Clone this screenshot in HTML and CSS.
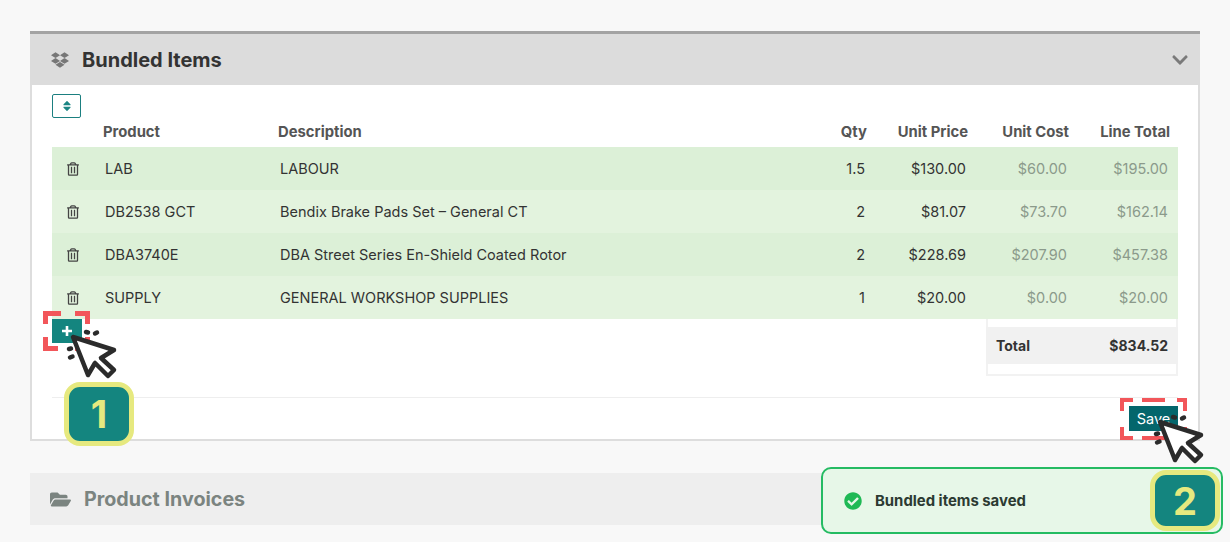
FILE: index.html
```html
<!DOCTYPE html>
<html lang="en">
<head>
    <meta charset="UTF-8">
    <meta name="viewport" content="width=device-width, initial-scale=1.0">
    <title>Bundled Items</title>
    <link rel="stylesheet" href="styles.css">
</head>
<body>
    <svg class="defs" width="0" height="0">
        <symbol id="trash" viewBox="0 0 448 512"><path d="M268 416h24a12 12 0 0 0 12-12V188a12 12 0 0 0-12-12h-24a12 12 0 0 0-12 12v216a12 12 0 0 0 12 12zM432 80h-82.41l-34-56.7A48 48 0 0 0 274.41 0H173.59a48 48 0 0 0-41.16 23.3L98.41 80H16A16 16 0 0 0 0 96v16a16 16 0 0 0 16 16h16v336a48 48 0 0 0 48 48h288a48 48 0 0 0 48-48V128h16a16 16 0 0 0 16-16V96a16 16 0 0 0-16-16zM171.84 50.91A6 6 0 0 1 177 48h94a6 6 0 0 1 5.15 2.91L293.61 80H154.39zM368 464H80V128h288zm-212-48h24a12 12 0 0 0 12-12V188a12 12 0 0 0-12-12h-24a12 12 0 0 0-12 12v216a12 12 0 0 0 12 12z"/></symbol>
        <symbol id="cursor" viewBox="0 0 56 52" overflow="visible">
            <path d="M5 8 L46 21 L33 29 L46 41 L40 47 L27 34 L20 46 Z" fill="#fff" stroke="#2b2b2b" stroke-width="4.5" stroke-linejoin="round"/>
            <path d="M18 3 L20 3.5 M27 4.5 L29 3.5 M1 20 L3 19.5 M2 28.5 L4.5 27.5" fill="none" stroke="#2b2b2b" stroke-width="4.5" stroke-linecap="round"/>
        </symbol>
    </svg>

    <section class="panel">
        <header class="panel-head">
            <svg class="head-icon" viewBox="0 0 528 512"><path d="M264.4 116.3l-132 84.3 132 84.3-132 84.3L0 284.1l132.3-84.3L0 116.3 132.3 32l132.1 84.3zM131.6 395.7l132-84.3 132 84.3-132 84.3-132-84.3zm132.8-111.6l132-84.3-132-83.6L395.7 32 528 116.3l-132.3 84.3L528 284.8l-132.3 84.3-131.3-85z"/></svg>
            <h2>Bundled Items</h2>
            <svg class="chevron" viewBox="0 0 448 512"><path d="M207.029 381.476L12.686 187.132c-9.373-9.373-9.373-24.569 0-33.941l22.667-22.667c9.357-9.357 24.522-9.375 33.901-.04L224 284.505l154.745-154.021c9.379-9.335 24.544-9.317 33.901.04l22.667 22.667c9.373 9.373 9.373 24.569 0 33.941L240.971 381.476c-9.373 9.372-24.569 9.372-33.942 0z"/></svg>
        </header>

        <div class="panel-body">
            <button class="sort-btn" type="button">
                <svg viewBox="0 0 320 512"><path d="M41 288h238c21.4 0 32.1 25.9 17 41L177 448c-9.4 9.4-24.6 9.4-33.9 0L24 329c-15.1-15.1-4.4-41 17-41zm255-105L177 64c-9.4-9.4-24.6-9.4-33.9 0L24 183c-15.1 15.1-4.4 41 17 41h238c21.4 0 32.1-25.9 17-41z"/></svg>
            </button>

            <table class="items">
                <colgroup>
                    <col class="col-del">
                    <col class="col-product">
                    <col>
                    <col class="col-qty">
                    <col class="col-money">
                    <col class="col-money">
                    <col class="col-last">
                </colgroup>
                <thead>
                    <tr>
                        <th></th>
                        <th>Product</th>
                        <th>Description</th>
                        <th class="num">Qty</th>
                        <th class="num">Unit Price</th>
                        <th class="num">Unit Cost</th>
                        <th class="num">Line Total</th>
                    </tr>
                </thead>
                <tbody>
                    <tr>
                        <td class="del"><svg class="trash"><use href="#trash"/></svg></td>
                        <td>LAB</td>
                        <td>LABOUR</td>
                        <td class="num">1.5</td>
                        <td class="num">$130.00</td>
                        <td class="num muted">$60.00</td>
                        <td class="num muted">$195.00</td>
                    </tr>
                    <tr>
                        <td class="del"><svg class="trash"><use href="#trash"/></svg></td>
                        <td>DB2538 GCT</td>
                        <td>Bendix Brake Pads Set – General CT</td>
                        <td class="num">2</td>
                        <td class="num">$81.07</td>
                        <td class="num muted">$73.70</td>
                        <td class="num muted">$162.14</td>
                    </tr>
                    <tr>
                        <td class="del"><svg class="trash"><use href="#trash"/></svg></td>
                        <td>DBA3740E</td>
                        <td>DBA Street Series En-Shield Coated Rotor</td>
                        <td class="num">2</td>
                        <td class="num">$228.69</td>
                        <td class="num muted">$207.90</td>
                        <td class="num muted">$457.38</td>
                    </tr>
                    <tr>
                        <td class="del"><svg class="trash"><use href="#trash"/></svg></td>
                        <td>SUPPLY</td>
                        <td>GENERAL WORKSHOP SUPPLIES</td>
                        <td class="num">1</td>
                        <td class="num">$20.00</td>
                        <td class="num muted">$0.00</td>
                        <td class="num muted">$20.00</td>
                    </tr>
                </tbody>
            </table>

            <div class="under-table">
                <button class="add-btn" type="button">
                    <svg viewBox="0 0 12 12"><path d="M6 1v10M1 6h10" stroke="#fff" stroke-width="2.6"/></svg>
                </button>
                <div class="totals">
                    <div class="total-row"><span>Total</span><span>$834.52</span></div>
                </div>
            </div>

            <div class="panel-foot">
                <button class="save-btn" type="button">Save</button>
            </div>
        </div>
    </section>

    <section class="panel-closed">
        <svg class="head-icon" viewBox="0 0 576 512"><path d="M572.694 292.093L500.27 416.248A63.997 63.997 0 0 1 444.989 448H45.025c-18.523 0-30.064-20.093-20.731-36.093l72.424-124.155A64 64 0 0 1 152 256h399.964c18.523 0 30.064 20.093 20.73 36.093zM152 224h328v-48c0-26.51-21.49-48-48-48H272l-64-64H48C21.49 64 0 85.49 0 112v278.046l69.077-118.418C86.214 242.25 117.989 224 152 224z"/></svg>
        <h2>Product Invoices</h2>
    </section>

    <!-- tutorial annotations drawn over the page -->
    <div class="mark mark-add"></div>
    <div class="mark mark-save"></div>

    <div class="toast">
        <svg class="toast-icon" viewBox="0 0 512 512"><path d="M504 256c0 136.967-111.033 248-248 248S8 392.967 8 256 119.033 8 256 8s248 111.033 248 248zM227.314 387.314l184-184c6.248-6.248 6.248-16.379 0-22.627l-22.627-22.627c-6.248-6.249-16.379-6.249-22.628 0L216 308.118l-70.059-70.059c-6.248-6.248-16.379-6.248-22.628 0l-22.627 22.627c-6.248 6.248-6.248 16.379 0 22.627l104 104c6.249 6.249 16.379 6.249 22.628.001z"/></svg>
        <span>Bundled items saved</span>
    </div>

    <svg class="cursor cursor-add"><use href="#cursor"/></svg>
    <svg class="cursor cursor-save"><use href="#cursor"/></svg>

    <div class="badge badge-one">1</div>
    <div class="badge badge-two">2</div>
</body>
</html>
```

FILE: styles.css
```css
html, body {
    height: 542px;
    overflow: hidden;
}

body {
    position: relative;
    box-sizing: border-box;
    margin: 0;
    padding: 31px 30px 0;
    background-color: #f8f8f8;
    font-family: Inter, "Liberation Sans", sans-serif;
    color: #333;
}

.defs {
    position: absolute;
}

.panel {
    border-top: 3px solid #a3a3a3;
}

.panel-head {
    display: flex;
    align-items: center;
    height: 51px;
    padding: 0 12px 0 21px;
    background: #dcdcdc;
}

.panel-head h2,
.panel-closed h2 {
    margin: 0 0 0 13px;
    font-size: 20px;
    font-weight: 700;
    color: #333;
}

.head-icon {
    width: 18px;
    height: 18px;
    fill: #777;
}

.chevron {
    width: 16px;
    height: 18px;
    margin-left: auto;
    fill: #7a7a7a;
}

.panel-body {
    padding: 9px 20px 8px;
    background: #fff;
    border: 2px solid #ddd;
    border-top: none;
}

.sort-btn {
    display: block;
    width: 29px;
    height: 24px;
    padding: 0;
    background: #fff;
    border: 1px solid #1b7f80;
    border-radius: 2px;
}

.sort-btn svg {
    display: block;
    width: 8px;
    height: 14px;
    margin: 0 auto;
    fill: #1b8584;
}

.items {
    width: 100%;
    table-layout: fixed;
    border-collapse: collapse;
    font-size: 14.5px;
}

.col-del { width: 51px; }
.col-product { width: 175px; }
.col-qty { width: 100px; }
.col-money { width: 101px; }
.col-last { width: 107px; }

.items th {
    height: 28px;
    padding: 0 2px 1px 0;
    text-align: left;
    font-size: 14.8px;
    font-weight: 700;
    color: #555;
}

.items th:last-child {
    padding-right: 8px;
}

.items td {
    height: 43px;
    padding: 0 4px 0 2px;
    color: #333;
}

.items td:last-child {
    padding-right: 10px;
}

.items tbody tr:nth-child(odd) {
    background: #dcf0d7;
}

.items tbody tr:nth-child(even) {
    background: #e3f3de;
}

.items .num {
    text-align: right;
}

.items .muted {
    color: #8b9a8b;
}

.items .del {
    padding: 0 9px 0 0;
    text-align: center;
    line-height: 0;
}

.trash {
    width: 12px;
    height: 14px;
    fill: #444;
}

.under-table {
    display: flex;
    justify-content: space-between;
    align-items: flex-start;
}

.add-btn {
    width: 30px;
    height: 24px;
    padding: 0;
    background: #14857f;
    border: none;
}

.add-btn svg {
    display: block;
    width: 12px;
    height: 12px;
    margin: 0 auto;
}

.totals {
    width: 192px;
    height: 57px;
    box-sizing: border-box;
    padding: 8px 0 12px;
    border: 2px solid #f2f2f2;
    border-top: none;
}

.total-row {
    display: flex;
    justify-content: space-between;
    align-items: center;
    height: 37px;
    margin: 0 -2px;
    padding: 0 10px;
    background: #f1f1f1;
    font-size: 14px;
    font-weight: 700;
    color: #333;
}

.panel-foot {
    display: flex;
    justify-content: flex-end;
    margin-top: 21px;
    padding-top: 8px;
    border-top: 1px solid #eee;
}

.save-btn {
    width: 49px;
    height: 25px;
    padding: 0;
    background: #04666c;
    border: none;
    font-family: inherit;
    font-size: 14.5px;
    color: #fff;
}

.panel-closed {
    display: flex;
    align-items: center;
    height: 52px;
    margin-top: 32px;
    padding-left: 20px;
    background: #eee;
}

.panel-closed .head-icon {
    width: 21px;
    height: 19px;
    fill: #7b8480;
}

.panel-closed h2 {
    margin-left: 13px;
    font-size: 19.7px;
    color: #7b8480;
}

/* annotations */
.mark {
    position: absolute;
    box-sizing: border-box;
    --red: linear-gradient(#f2565a, #f2565a);
}

.mark-add {
    left: 43px;
    top: 311px;
    width: 47px;
    height: 40px;
    background:
        var(--red) 0 0 / 18px 5px no-repeat,
        var(--red) 0 0 / 5px 13px no-repeat,
        var(--red) 100% 0 / 15px 5px no-repeat,
        var(--red) 100% 0 / 5px 13px no-repeat,
        var(--red) 0 100% / 15px 5px no-repeat,
        var(--red) 0 100% / 5px 14px no-repeat,
        var(--red) 100% 100% / 15px 5px no-repeat,
        var(--red) 100% 100% / 5px 14px no-repeat;
}

.mark-save {
    left: 1120px;
    top: 398px;
    width: 67px;
    height: 42px;
    background:
        var(--red) 0 0 / 13px 4px no-repeat,
        var(--red) 0 0 / 4px 13px no-repeat,
        var(--red) 22px 0 / 23px 4px no-repeat,
        var(--red) 100% 0 / 10px 4px no-repeat,
        var(--red) 100% 0 / 4px 13px no-repeat,
        var(--red) 0 100% / 13px 4px no-repeat,
        var(--red) 0 100% / 4px 13px no-repeat,
        var(--red) 22px 100% / 23px 4px no-repeat,
        var(--red) 100% 100% / 10px 4px no-repeat,
        var(--red) 100% 100% / 4px 13px no-repeat;
}

.cursor {
    position: absolute;
    width: 56px;
    height: 52px;
    overflow: visible;
}

.cursor-add {
    left: 68px;
    top: 329px;
}

.cursor-save {
    left: 1155px;
    top: 414px;
}

.badge {
    position: absolute;
    display: flex;
    align-items: center;
    justify-content: center;
    box-sizing: border-box;
    background: #14857f;
    border: 5px solid #e6e97f;
    border-radius: 16px;
    font-size: 38px;
    font-weight: 700;
    color: #e6e97f;
}

.badge-one {
    left: 64px;
    top: 382px;
    width: 70px;
    height: 64px;
}

.badge-two {
    left: 1150px;
    top: 470px;
    width: 70px;
    height: 61px;
}

.toast {
    position: absolute;
    left: 821px;
    top: 467px;
    display: flex;
    align-items: center;
    box-sizing: border-box;
    width: 402px;
    height: 67px;
    padding-left: 21px;
    background: #e7f7e8;
    border: 2px solid #25bb63;
    border-radius: 10px;
    font-size: 14.9px;
    font-weight: 700;
    color: #2c3a32;
}

.toast-icon {
    width: 18px;
    height: 18px;
    margin-right: 13px;
    fill: #1fb955;
}
```
